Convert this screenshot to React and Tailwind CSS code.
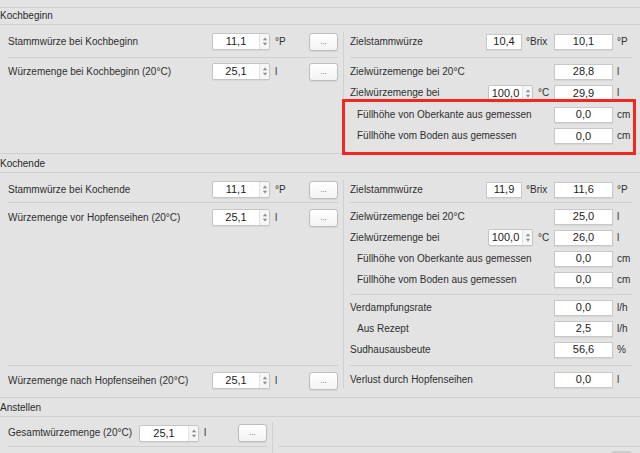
import React from 'react';

// Thin separator line used between rows and sections
const Line = ({ className = '' }) => <div className={`h-px bg-[#d0d0d0] ${className}`} />;

const Arrows = () => (
  <svg width="6" height="11" viewBox="0 0 6 11">
    <path d="M0.8 4.2 L3 1.4 L5.2 4.2 Z" fill="#8c8c8c" />
    <path d="M0.8 6.8 L3 9.6 L5.2 6.8 Z" fill="#8c8c8c" />
  </svg>
);

// Spin box with stepper arrows on the right
const Spin = ({ value, width }) => (
  <div className={`shrink-0 flex h-[17px] ${width} bg-white border border-[#c4c4c4] rounded-[2px] shadow-[0_1px_1px_rgba(0,0,0,0.05)]`}>
    <div className="flex-1 flex items-center justify-center text-[11px] text-[#1c1c1c]">{value}</div>
    <div className="w-[10px] flex items-center justify-center border-l border-[#e2e2e2] bg-[#f6f6f6]">
      <Arrows />
    </div>
  </div>
);

// Plain read-only number field
const Field = ({ value, width = 'w-[59px]' }) => (
  <div className={`shrink-0 flex items-center justify-center h-[16px] ${width} bg-white border border-[#c8c8c8] shadow-[0_1px_1px_rgba(0,0,0,0.05)] text-[11px] text-[#1c1c1c]`}>
    {value}
  </div>
);

const DotsButton = () => (
  <div className="shrink-0 w-[29px] h-[18px] flex items-end justify-center pb-[4px] rounded-[3px] border border-[#bdbdbd] bg-gradient-to-b from-white to-[#f3f3f3] shadow-[0_1px_1px_rgba(0,0,0,0.08)] text-[8px] text-[#666] leading-none">
    ...
  </div>
);

const Header = ({ title, height }) => (
  <div className={`${height} flex items-center border-b border-[#d0d0d0] text-[#2a2a2a]`}>{title}</div>
);

// Row in the left column: label, spin box, unit and "..." button
const LeftRow = ({ label, value, unit, className = '' }) => (
  <div className={`flex items-center h-[17px] ${className}`}>
    <div className="w-[204px] shrink-0 whitespace-nowrap">{label}</div>
    <Spin value={value} width="w-[58px]" />
    <div className="flex-1 pl-[5px]">{unit}</div>
    <DotsButton />
  </div>
);

// Row in the right column: label, optional middle element, value field, unit
const RightRow = ({ label, mid, value, unit, height = 'h-[21px]', indent = false }) => (
  <div className={`flex items-center ${height}`}>
    <div className={`flex-1 min-w-0 whitespace-nowrap ${indent ? 'pl-[7px]' : ''}`}>{label}</div>
    <div className="w-[68px] shrink-0 flex items-center">{mid}</div>
    <Field value={value} />
    <div className="w-[27px] shrink-0 pl-[4px] whitespace-nowrap">{unit}</div>
  </div>
);

const Brix = ({ value }) => (
  <>
    <Field value={value} width="w-[36px]" />
    <span className="ml-[4px]">°Brix</span>
  </>
);

const Temp = () => (
  <>
    <div className="ml-[2px]">
      <Spin value="100,0" width="w-[45px]" />
    </div>
    <span className="ml-[5px]">°C</span>
  </>
);

export default function App() {
  return (
    <div className="relative w-[640px] h-[453px] overflow-hidden bg-[#e3e3e3] font-['Liberation_Sans',Arial,sans-serif] text-[10px] leading-none text-[#2f2f2f]">
      <div className="h-[8px] border-b border-[#d0d0d0]" />

      {/* Kochbeginn */}
      <Header title="Kochbeginn" height="h-[17px]" />
      <div className="h-[129px] flex border-b border-[#d0d0d0]">
        <div className="w-[343px] shrink-0 pl-[8px] pr-[5px] pt-[8px]">
          <LeftRow label="Stammwürze bei Kochbeginn" value="11,1" unit="°P" />
          <Line className="mt-[7px]" />
          <LeftRow label="Würzemenge bei Kochbeginn (20°C)" value="25,1" unit="l" className="mt-[5px]" />
        </div>
        <div className="w-px shrink-0 bg-[#d0d0d0] mt-[7px] mb-[2px]" />
        <div className="flex-1 min-w-0 pl-[6px] pt-[8px]">
          <RightRow label="Zielstammwürze" mid={<Brix value="10,4" />} value="10,1" unit="°P" height="h-[17px]" />
          <Line className="mt-[7px] mr-[8px]" />
          <div className="mt-[3px]">
            <RightRow label="Zielwürzemenge bei 20°C" value="28,8" unit="l" height="h-[21.5px]" />
            <RightRow label="Zielwürzemenge bei" mid={<Temp />} value="29,9" unit="l" height="h-[21.5px]" />
            <RightRow label="Füllhöhe von Oberkante aus gemessen" value="0,0" unit="cm" height="h-[21.5px]" indent />
            <RightRow label="Füllhöhe vom Boden aus gemessen" value="0,0" unit="cm" height="h-[21.5px]" indent />
          </div>
        </div>
      </div>

      {/* Kochende */}
      <Header title="Kochende" height="h-[19px] pt-[1px]" />
      <div className="h-[225px] flex border-b border-[#d0d0d0]">
        <div className="w-[343px] shrink-0 pl-[8px] pr-[5px] pt-[8px] pb-[8px] flex flex-col">
          <LeftRow label="Stammwürze bei Kochende" value="11,1" unit="°P" />
          <Line className="mt-[4px]" />
          <LeftRow label="Würzemenge vor Hopfenseihen (20°C)" value="25,1" unit="l" className="mt-[6px]" />
          <div className="flex-1" />
          <Line />
          <LeftRow label="Würzemenge nach Hopfenseihen (20°C)" value="25,1" unit="l" className="mt-[6px]" />
        </div>
        <div className="w-px shrink-0 bg-[#d0d0d0] mt-[7px] mb-[9px]" />
        <div className="flex-1 min-w-0 pl-[6px] pt-[8px]">
          <RightRow label="Zielstammwürze" mid={<Brix value="11,9" />} value="11,6" unit="°P" height="h-[17px]" />
          <Line className="mt-[4px] mr-[8px]" />
          <div className="mt-[3px]">
            <RightRow label="Zielwürzemenge bei 20°C" value="25,0" unit="l" />
            <RightRow label="Zielwürzemenge bei" mid={<Temp />} value="26,0" unit="l" />
            <RightRow label="Füllhöhe von Oberkante aus gemessen" value="0,0" unit="cm" indent />
            <RightRow label="Füllhöhe vom Boden aus gemessen" value="0,0" unit="cm" indent />
          </div>
          <Line className="mt-[4px] mr-[8px]" />
          <div className="mt-[2px]">
            <RightRow label="Verdampfungsrate" value="0,0" unit="l/h" />
            <RightRow label="Aus Rezept" value="2,5" unit="l/h" indent />
            <RightRow label="Sudhausausbeute" value="56,6" unit="%" />
          </div>
          <Line className="mt-[5px] mr-[8px]" />
          <div className="mt-[5px]">
            <RightRow label="Verlust durch Hopfenseihen" value="0,0" unit="l" height="h-[17px]" />
          </div>
        </div>
      </div>

      {/* Anstellen */}
      <Header title="Anstellen" height="h-[19px] pt-[1px]" />
      <div className="h-[36px] flex">
        <div className="w-[272px] shrink-0 pl-[8px] pr-[5px] pt-[7px]">
          <div className="flex items-center h-[18px]">
            <div className="w-[131px] shrink-0 whitespace-nowrap">Gesamtwürzemenge (20°C)</div>
            <Spin value="25,1" width="w-[60px]" />
            <div className="flex-1 pl-[5px]">l</div>
            <DotsButton />
          </div>
          <Line className="mt-[4px]" />
        </div>
        <div className="w-px shrink-0 bg-[#d0d0d0] mt-[5px]" />
        <div className="flex-1 min-w-0 pl-[5px] pt-[29px]">
          <Line />
          <div className="mt-[4px] ml-auto mr-[8px] w-[21px] h-[8px] rounded-t-[3px] bg-[#cdcdcd]" />
        </div>
      </div>

      {/* Red annotation frame */}
      <div className="absolute left-[342px] top-[99px] w-[294px] h-[56px] border-[3px] border-[#f5261f]" />
    </div>
  );
}
